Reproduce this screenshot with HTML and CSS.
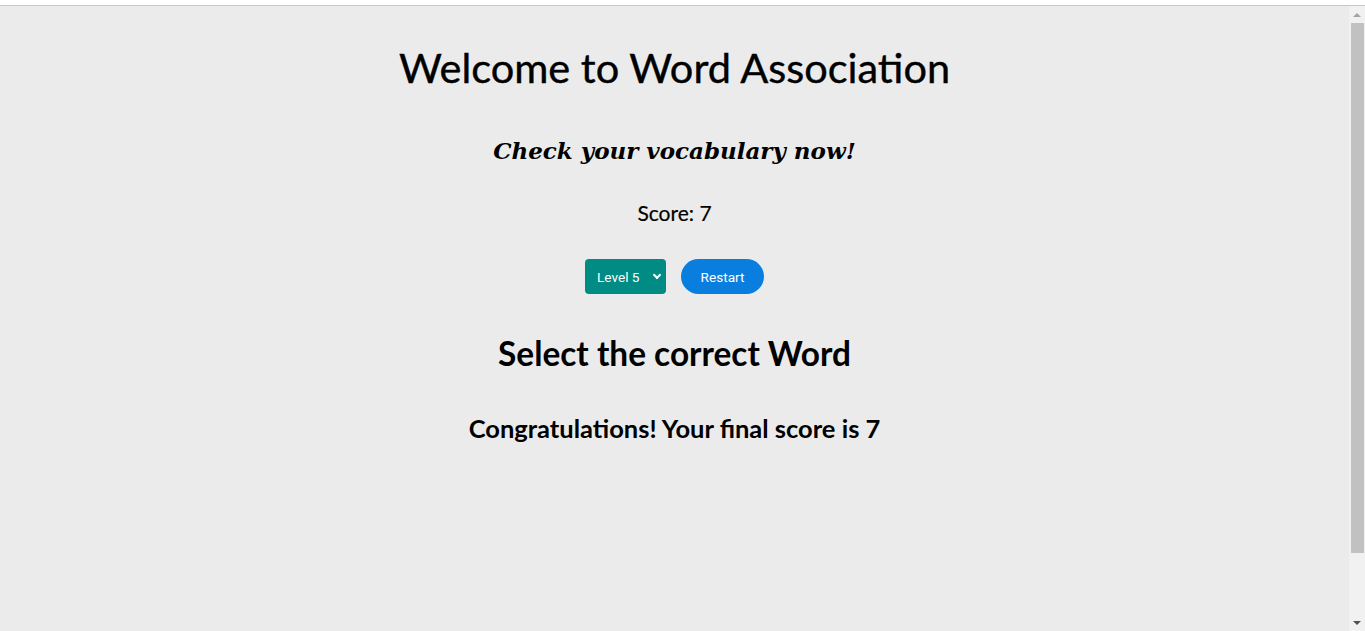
FILE: index.html
```html
<!DOCTYPE html>
<html lang="en">
<head>
<meta charset="utf-8">
<title>Word Association</title>
<link rel="stylesheet" href="styles.css">
</head>
<body>
<div class="topstrip"></div>
<div class="window">
  <main class="page">
    <h1 class="title">Welcome to Word Association</h1>
    <h2 class="subtitle">Check your vocabulary now!</h2>
    <p class="score">Score: 7</p>
    <div class="controls">
      <div class="level">
        <select class="level-select">
          <option>Level 1</option>
          <option>Level 2</option>
          <option>Level 3</option>
          <option>Level 4</option>
          <option selected>Level 5</option>
        </select>
      </div>
      <button class="restart">Restart</button>
    </div>
    <h2 class="question">Select the correct Word</h2>
    <h3 class="final">Congratulations! Your final score is 7</h3>
  </main>
  <div class="scrollbar">
    <div class="sb-arrow sb-up"></div>
    <div class="sb-track"><div class="sb-thumb"></div></div>
    <div class="sb-arrow sb-down"></div>
  </div>
</div>
</body>
</html>
```
FILE: styles.css
```css
html, body {
  margin: 0;
  padding: 0;
  background: #ffffff;
  overflow: hidden;
}
.topstrip {
  height: 5px;
  background: #ffffff;
  border-bottom: 1px solid #c9c9c9;
}
.window {
  display: flex;
  height: 625px;
}
.page {
  flex: 1;
  background: #ebebeb;
  text-align: center;
  color: #000;
  font-family: Lato, "Open Sans", sans-serif;
  padding-top: 36px;
}
.title {
  margin: 0;
  font-size: 41.5px;
  line-height: 50px;
  font-weight: 400;
  -webkit-text-stroke: 0.4px #000;
}
.subtitle {
  margin: 45px 0 0;
  font-family: "DejaVu Serif", Georgia, serif;
  font-style: italic;
  font-weight: 700;
  font-size: 23px;
  line-height: 28px;
}
.score {
  margin: 36px 0 0;
  font-size: 21px;
  line-height: 24px;
  -webkit-text-stroke: 0.2px #000;
}
.controls {
  display: flex;
  justify-content: center;
  gap: 15px;
  margin-top: 34px;
}
.level {
  position: relative;
  width: 81px;
  height: 35px;
}
.level::after {
  content: "";
  position: absolute;
  left: 69px;
  top: 13px;
  width: 4px;
  height: 4px;
  border-right: 2px solid #ffffff;
  border-bottom: 2px solid #ffffff;
  transform: rotate(45deg);
  pointer-events: none;
}
.level-select {
  appearance: none;
  -webkit-appearance: none;
  -moz-appearance: none;
  display: block;
  width: 81px;
  height: 35px;
  border: none;
  border-radius: 4px;
  background-color: #008b84;
  background-image: none;
  color: #ffffff;
  font-family: Roboto, Arial, sans-serif;
  font-size: 13.6px;
  padding: 0 0 0 12px;
  margin: 0;
  outline: none;
}
.restart {
  width: 83px;
  height: 35px;
  border: none;
  border-radius: 18px;
  background: #0a7ede;
  color: #ffffff;
  font-family: Roboto, Arial, sans-serif;
  font-size: 13.6px;
  padding: 0;
  margin: 0;
}
.question {
  margin: 39px 0 0;
  font-size: 33.4px;
  line-height: 40px;
  font-weight: 700;
}
.final {
  margin: 40px 0 0;
  font-size: 25.5px;
  line-height: 30px;
  font-weight: 700;
}
.scrollbar {
  width: 16px;
  background: #f1f1f1;
  display: flex;
  flex-direction: column;
}
.sb-arrow {
  height: 17px;
  display: flex;
  justify-content: center;
  align-items: center;
}
.sb-up::before {
  content: "";
  border-left: 4px solid transparent;
  border-right: 4px solid transparent;
  border-bottom: 4px solid #a3a3a3;
}
.sb-down::before {
  content: "";
  border-left: 4px solid transparent;
  border-right: 4px solid transparent;
  border-top: 4px solid #505050;
}
.sb-track {
  flex: 1;
  padding: 0 1px 0 2px;
}
.sb-thumb {
  height: 530px;
  background: #c1c1c1;
}
```
